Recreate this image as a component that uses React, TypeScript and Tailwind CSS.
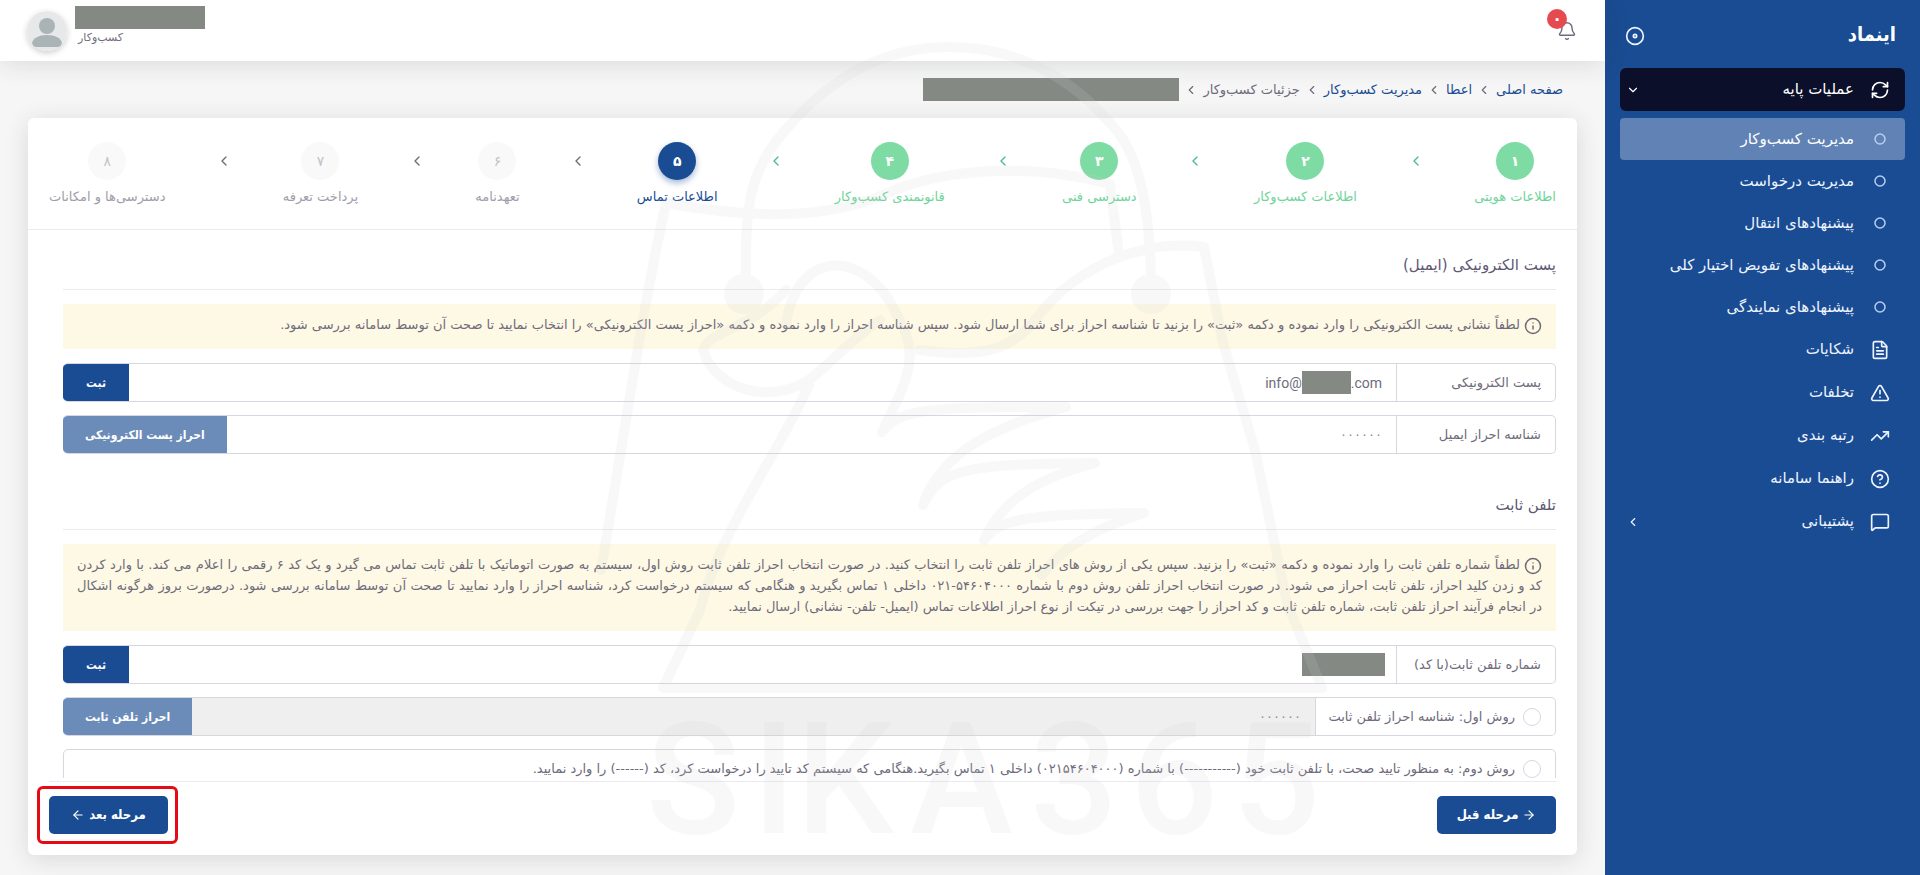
import type { ReactNode } from 'react'
import {
  ArrowLeft,
  ArrowRight,
  Bell,
  ChevronDown,
  ChevronLeft,
  CircleHelp,
  Circle,
  Disc,
  FileText,
  Info,
  MessageSquare,
  RefreshCw,
  TrendingUp,
  TriangleAlert,
} from 'lucide-react'

const subItems = [
  'مدیریت کسب‌وکار',
  'مدیریت درخواست',
  'پیشنهادهای انتقال',
  'پیشنهادهای تفویض اختیار کلی',
  'پیشنهادهای نمایندگی',
]

const mainItems = [
  { label: 'شکایات', icon: FileText },
  { label: 'تخلفات', icon: TriangleAlert },
  { label: 'رتبه بندی', icon: TrendingUp },
  { label: 'راهنما سامانه', icon: CircleHelp },
  { label: 'پشتیبانی', icon: MessageSquare, hasChildren: true },
]

const steps = [
  { n: '۱', label: 'اطلاعات هویتی', state: 'done' },
  { n: '۲', label: 'اطلاعات کسب‌وکار', state: 'done' },
  { n: '۳', label: 'دسترسی فنی', state: 'done' },
  { n: '۴', label: 'قانونمندی کسب‌وکار', state: 'done' },
  { n: '۵', label: 'اطلاعات تماس', state: 'active' },
  { n: '۶', label: 'تعهدنامه', state: 'todo' },
  { n: '۷', label: 'پرداخت تعرفه', state: 'todo' },
  { n: '۸', label: 'دسترسی‌ها و امکانات', state: 'todo' },
]

const circleStyles: Record<string, string> = {
  done: 'bg-[#7edba4] font-bold text-white',
  active: 'bg-[#1a4c93] font-bold text-white shadow-[0_3px_6px_rgba(26,76,147,0.4)]',
  todo: 'bg-[#f9f9f9] text-[#c3c2c8]',
}

const labelStyles: Record<string, string> = {
  done: 'text-[#6fd49a]',
  active: 'text-[#1a4c93]',
  todo: 'text-[#a09eaa]',
}

function Sidebar() {
  return (
    <aside className="flex w-[315px] shrink-0 flex-col bg-[#1a4c93] px-[15px] text-[#eef4ff]">
      <div className="flex h-[68px] items-center justify-between pl-[5px] pr-[9px]">
        <h1 className="font-['DejaVu_Sans_Condensed','DejaVu_Sans',sans-serif] text-xl font-bold text-white">اینماد</h1>
        <button type="button" aria-label="جمع کردن منو" className="pt-1">
          <Disc size={20} />
        </button>
      </div>
      <nav className="text-[15px]">
        <a href="#base" className="flex h-[43px] items-center rounded-md bg-[#0c0f29] pl-1.5 pr-[15px] text-white">
          <RefreshCw size={20} className="ml-4" />
          <span className="flex-1">عملیات پایه</span>
          <ChevronDown size={14} />
        </a>
        <ul className="mt-[7px]">
          {subItems.map((label, i) => (
            <li key={label}>
              <a
                href="#sub"
                className={
                  i === 0
                    ? 'flex h-[42px] items-center rounded-sm bg-[#6082b4] pr-[19px] text-white'
                    : 'flex h-[42px] items-center pr-[19px]'
                }
              >
                <Circle size={12} strokeWidth={3} className="ml-5 text-[#b9cdf0]" />
                {label}
              </a>
            </li>
          ))}
          {mainItems.map((item) => (
            <li key={item.label}>
              <a href="#main" className="flex h-[43px] items-center pl-1.5 pr-[15px]">
                <item.icon size={20} className="ml-4" />
                <span className="flex-1">{item.label}</span>
                {item.hasChildren && <ChevronLeft size={14} />}
              </a>
            </li>
          ))}
        </ul>
      </nav>
    </aside>
  )
}

function Header() {
  return (
    <header className="flex h-[61px] shrink-0 items-center justify-between bg-white pl-[27px] pr-7 shadow-[0_4px_24px_rgba(34,41,47,0.12)]">
      <button type="button" aria-label="اعلان‌ها" className="relative text-[#6e6b7b]">
        <Bell size={20} strokeWidth={1.7} />
        <span className="absolute -top-3 left-[-10px] flex size-5 items-center justify-center rounded-full bg-[#e54a50] text-base font-bold text-white">
          ۰
        </span>
      </button>
      <div className="flex items-center gap-2">
        <div className="flex flex-col items-end pb-2">
          <div className="h-[23px] w-[130px] bg-[#848984]" />
          <span className="pl-[3px] text-[11px] leading-[18px] text-[#6e6b7b]">کسب‌وکار</span>
        </div>
        <svg viewBox="0 0 40 40" className="size-10 rounded-full shadow-[0_2px_6px_rgba(0,0,0,0.2)]">
          <circle cx="20" cy="20" r="20" fill="#e6e8e9" />
          <circle cx="20" cy="15" r="8" fill="#aab4b7" />
          <path d="M5 32c1-5 7-8 15-8s14 3 15 8q-1 4-4 4H9q-3 0-4-4z" fill="#aab4b7" />
        </svg>
      </div>
    </header>
  )
}

function Breadcrumb() {
  return (
    <nav className="flex h-[57px] shrink-0 items-center gap-[5px] pr-[14px] text-[13px] text-[#6e6b7b]">
      <a href="#home" className="text-[#1a4c93]">صفحه اصلی</a>
      <ChevronLeft size={14} />
      <a href="#grant" className="text-[#1a4c93]">اعطا</a>
      <ChevronLeft size={14} />
      <a href="#manage" className="text-[#1a4c93]">مدیریت کسب‌وکار</a>
      <ChevronLeft size={14} />
      <span>جزئیات کسب‌وکار</span>
      <ChevronLeft size={14} />
      <div className="h-[23px] w-[256px] bg-[#848984]" />
    </nav>
  )
}

function Stepper() {
  return (
    <ol className="flex shrink-0 justify-between border-b border-[#ebe9f1] px-[21px] pb-[21px] pt-6">
      {steps.map((step, i) => (
        <li key={step.n} className="contents">
          {i > 0 && (
            <ChevronLeft
              size={16}
              className={i < 5 ? 'mt-[11px] text-[#4dbb8b]' : 'mt-[11px] text-[#6e6b7b]'}
            />
          )}
          <div className="flex flex-col items-center gap-1.5">
            <span className={`flex size-[38px] items-center justify-center rounded-full text-sm ${circleStyles[step.state]}`}>
              {step.n}
            </span>
            <span className={`text-[13px] leading-[22px] ${labelStyles[step.state]}`}>{step.label}</span>
          </div>
        </li>
      ))}
    </ol>
  )
}

function SectionTitle({ children }: { children: ReactNode }) {
  return <h2 className="border-b border-[#ebe9f1] pb-3 text-[15px] leading-[24px] text-[#5e5873]">{children}</h2>
}

function Note({ children }: { children: ReactNode }) {
  return (
    <p className="my-[14px] bg-[#fef9e5] px-[14px] pb-[14px] pt-[10px] text-justify text-[13px] leading-[21px] text-[#6e6b7b]">
      <Info size={18} className="ml-1 inline align-middle" />
      {children}
    </p>
  )
}

function SubmitButton({ children, disabled }: { children: ReactNode; disabled?: boolean }) {
  return (
    <button
      type="button"
      disabled={disabled}
      className="min-w-[66px] shrink-0 bg-[#1a4c93] px-[22px] font-['DejaVu_Sans_Condensed','DejaVu_Sans',sans-serif] text-xs font-bold text-white disabled:bg-[#6b8bb9]"
    >
      {children}
    </button>
  )
}

const rowClass =
  'mb-[13px] flex h-[39px] overflow-hidden rounded-[5px] border border-l-0 border-[#d8d6de] text-[13px] text-[#6e6b7b]'

const stepButtonClass =
  "relative flex h-[38px] w-[119px] items-center justify-center gap-1 rounded-[5px] bg-[#1a4c93] font-['DejaVu_Sans_Condensed','DejaVu_Sans',sans-serif] text-[13px] font-bold text-white"

function Watermark() {
  return (
    <div className="pointer-events-none absolute inset-x-0 top-[30px] flex justify-center">
      <svg width="760" height="845" viewBox="580 30 760 845" fill="none" className="opacity-[0.15]">
        <g stroke="#d4d4d4" strokeWidth="10" strokeLinecap="round" strokeLinejoin="round">
          <path d="M746 280C744 200 752 165 790 125C830 80 880 47 950 47C1030 47 1085 90 1120 135C1145 170 1150 230 1151 280" />
          <path d="M601 570C622 450 640 320 666 203C760 220 830 218 885 194C950 165 1040 165 1110 184L1119 255" />
          <path d="M786 325C795 250 865 245 897 315C920 355 910 375 882 432C900 408 930 407 1066 407C980 430 938 460 923 505C940 470 960 464 1095 463C1030 480 1000 505 984 540C1000 518 1030 514 1144 513C1090 530 1060 550 1042 575" />
          <path d="M786 290C750 330 710 330 703 350C715 390 770 405 809 380C840 355 850 340 880 320" />
          <path d="M919 350C990 360 1015 345 1035 320C1080 260 1150 240 1204 247L1223 343L1255 450L1287 603L1322 688H663L700 610C720 530 775 460 809 385" />
        </g>
        <circle cx="744" cy="294" r="20" fill="#d4d4d4" />
        <circle cx="1151" cy="294" r="20" fill="#d4d4d4" />
        <g fill="#d4d4d4" direction="ltr" fontFamily="Roboto, sans-serif" fontSize="155" fontWeight="500">
          <text x="646 752 796 910" y="833">SIKA</text>
          <text x="1030 1130 1232" y="833">365</text>
        </g>
      </svg>
    </div>
  )
}

export default function App() {
  return (
    <div
      dir="rtl"
      lang="fa"
      className="relative flex h-screen overflow-hidden bg-[#f6f6f6] font-['DejaVu_Sans',sans-serif]"
    >
      <Sidebar />
      <div className="flex min-w-0 flex-1 flex-col">
        <Header />
        <main className="flex min-h-0 flex-1 flex-col px-7 pb-5">
          <Breadcrumb />
          <div className="flex min-h-0 flex-1 flex-col rounded-md bg-white shadow-[0_4px_24px_rgba(34,41,47,0.14)]">
            <Stepper />
            <form className="flex min-h-0 flex-1 flex-col px-[21px]">
              <div className="min-h-0 flex-1 overflow-y-auto pl-[14px] pt-[23px] [scrollbar-width:none]">
                <SectionTitle>پست الکترونیکی (ایمیل)</SectionTitle>
                <Note>
                  لطفاً نشانی پست الکترونیکی را وارد نموده و دکمه «ثبت» را بزنید تا شناسه احراز برای شما ارسال شود. سپس
                  شناسه احراز را وارد نموده و دکمه «احراز پست الکترونیکی» را انتخاب نمایید تا صحت آن توسط سامانه بررسی
                  شود.
                </Note>
                <div className={rowClass}>
                  <label htmlFor="email" className="flex w-[159px] items-center border-l border-[#d8d6de] pr-[14px]">
                    پست الکترونیکی
                  </label>
                  <div dir="ltr" className="flex flex-1 items-center pr-[14px] font-[Roboto,sans-serif] text-sm">
                    <input id="email" defaultValue="info@" className="min-w-0 flex-1 text-right outline-none" />
                    <div className="h-[23px] w-[49px] bg-[#848984]" />
                    <span>.com</span>
                  </div>
                  <SubmitButton>ثبت</SubmitButton>
                </div>
                <div className={rowClass}>
                  <label htmlFor="email-code" className="flex w-[159px] items-center border-l border-[#d8d6de] pr-[14px]">
                    شناسه احراز ایمیل
                  </label>
                  <input
                    id="email-code"
                    placeholder="۰۰۰۰۰۰"
                    className="min-w-0 flex-1 px-[14px] outline-none placeholder:text-[#8f8d99]"
                  />
                  <SubmitButton disabled>احراز پست الکترونیکی</SubmitButton>
                </div>

                <div className="h-[26px]" />
                <SectionTitle>تلفن ثابت</SectionTitle>
                <Note>
                  لطفاً شماره تلفن ثابت را وارد نموده و دکمه «ثبت» را بزنید. سپس یکی از روش های احراز تلفن ثابت را
                  انتخاب کنید. در صورت انتخاب احراز تلفن ثابت روش اول، سیستم به صورت اتوماتیک با تلفن ثابت تماس می گیرد و
                  یک کد ۶ رقمی را اعلام می کند. با وارد کردن کد و زدن کلید احراز، تلفن ثابت احراز می شود. در صورت انتخاب
                  احراز تلفن روش دوم با شماره ۵۴۶۰۴۰۰۰-۰۲۱ داخلی ۱ تماس بگیرید و هنگامی که سیستم درخواست کرد، شناسه احراز
                  را وارد نمایید تا صحت آن توسط سامانه بررسی شود. درصورت بروز هرگونه اشکال در انجام فرآیند احراز تلفن
                  ثابت، شماره تلفن ثابت و کد احراز را جهت بررسی در تیکت از نوع احراز اطلاعات تماس (ایمیل- تلفن- نشانی)
                  ارسال نمایید.
                </Note>
                <div className={rowClass}>
                  <label htmlFor="phone" className="flex w-[159px] items-center border-l border-[#d8d6de] pr-[14px]">
                    شماره تلفن ثابت(با کد)
                  </label>
                  <div className="flex flex-1 items-center pr-[11px]">
                    <div className="h-[23px] w-[83px] bg-[#848984]" />
                    <input id="phone" className="min-w-0 flex-1 outline-none" />
                  </div>
                  <SubmitButton>ثبت</SubmitButton>
                </div>
                <div className={rowClass}>
                  <label className="flex w-[240px] items-center gap-2 border-l border-[#d8d6de] pr-[14px]">
                    <input
                      type="radio"
                      name="method"
                      className="size-[18px] appearance-none rounded-full border border-[#d8d6de] bg-white"
                    />
                    روش اول: شناسه احراز تلفن ثابت
                  </label>
                  <input
                    aria-label="شناسه احراز تلفن ثابت"
                    disabled
                    placeholder="۰۰۰۰۰۰"
                    className="min-w-0 flex-1 bg-[#efefef] px-[14px] placeholder:text-[#8f8d99]"
                  />
                  <SubmitButton disabled>احراز تلفن ثابت</SubmitButton>
                </div>
                <div className="flex h-[39px] items-center rounded-[5px] border border-[#d8d6de] pr-[14px] text-[13px] text-[#6e6b7b]">
                  <label className="flex items-center gap-2">
                    <input
                      type="radio"
                      name="method"
                      className="size-[18px] appearance-none rounded-full border border-[#d8d6de] bg-white"
                    />
                    روش دوم: به منظور تایید صحت، با تلفن ثابت خود (-----------) با شماره (۰۲۱۵۴۶۰۴۰۰۰) داخلی ۱ تماس
                    بگیرید.هنگامی که سیستم کد تایید را درخواست کرد، کد (------) را وارد نمایید.
                  </label>
                </div>
              </div>
              <div className="mt-[3px] flex h-[74px] shrink-0 justify-between border-t border-[#ebe9f1] pt-[14px]">
                <button type="button" className={stepButtonClass}>
                  <ArrowRight size={14} />
                  مرحله قبل
                </button>
                <button type="button" className={stepButtonClass}>
                  مرحله بعد
                  <ArrowLeft size={14} />
                  <span className="absolute -inset-y-[10px] -left-3 -right-[10px] rounded-md border-3 border-[#e60a14]" />
                </button>
              </div>
            </form>
          </div>
        </main>
      </div>
      <Watermark />
    </div>
  )
}
